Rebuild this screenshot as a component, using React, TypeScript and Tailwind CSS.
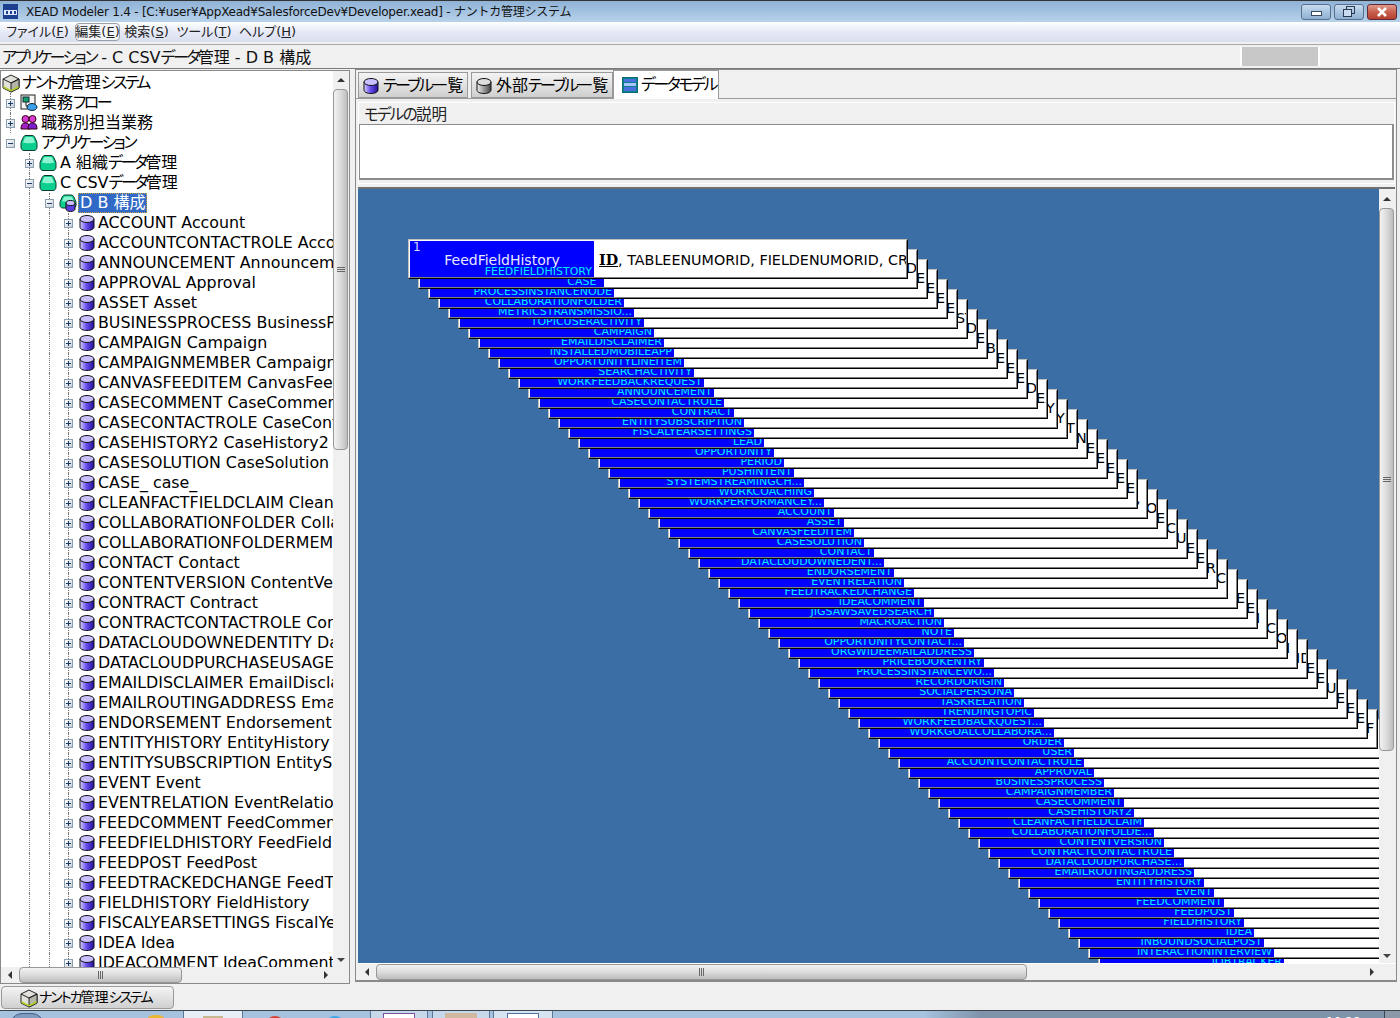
import React from 'react';

const tables = [
  'ACCOUNT Account', 'ACCOUNTCONTACTROLE AccountContactRole', 'ANNOUNCEMENT Announcement', 'APPROVAL Approval',
  'ASSET Asset', 'BUSINESSPROCESS BusinessProcess', 'CAMPAIGN Campaign', 'CAMPAIGNMEMBER CampaignMember',
  'CANVASFEEDITEM CanvasFeedItem', 'CASECOMMENT CaseComment', 'CASECONTACTROLE CaseContactRole', 'CASEHISTORY2 CaseHistory2',
  'CASESOLUTION CaseSolution', 'CASE_ case_', 'CLEANFACTFIELDCLAIM CleanFactFieldClaim', 'COLLABORATIONFOLDER CollaborationFolder',
  'COLLABORATIONFOLDERMEMBER Collaboration', 'CONTACT Contact', 'CONTENTVERSION ContentVersion', 'CONTRACT Contract',
  'CONTRACTCONTACTROLE ContractContactRole', 'DATACLOUDOWNEDENTITY DataCloud', 'DATACLOUDPURCHASEUSAGE DataCloud', 'EMAILDISCLAIMER EmailDisclaimer',
  'EMAILROUTINGADDRESS EmailRouting', 'ENDORSEMENT Endorsement', 'ENTITYHISTORY EntityHistory', 'ENTITYSUBSCRIPTION EntitySubscription',
  'EVENT Event', 'EVENTRELATION EventRelation', 'FEEDCOMMENT FeedComment', 'FEEDFIELDHISTORY FeedFieldHistory',
  'FEEDPOST FeedPost', 'FEEDTRACKEDCHANGE FeedTrackedChange', 'FIELDHISTORY FieldHistory', 'FISCALYEARSETTINGS FiscalYearSettings',
  'IDEA Idea', 'IDEACOMMENT IdeaComment',
];

const cards = [
  ['FEEDFIELDHISTORY', ''], ['CASE_', 'D'], ['PROCESSINSTANCENODE', 'E'], ['COLLABORATIONFOLDER', 'ED'], ['METRICSTRANSMISSIO...', 'E'],
  ['TOPICUSERACTIVITY', 'E'], ['CAMPAIGN', 'ST'], ['EMAILDISCLAIMER', 'D'], ['INSTALLEDMOBILEAPP', 'E'], ['OPPORTUNITYLINEITEM', 'BC'],
  ['SEARCHACTIVITY', 'E'], ['WORKFEEDBACKREQUEST', 'ED'], ['ANNOUNCEMENT', 'E'], ['CASECONTACTROLE', 'DI'], ['CONTRACT', 'EX'],
  ['ENTITYSUBSCRIPTION', 'Y'], ['FISCALYEARSETTINGS', 'YI'], ['LEAD', 'T'], ['OPPORTUNITY', 'N'], ['PERIOD', 'ED'],
  ['PUSHINTENT', 'E'], ['SYSTEMSTREAMINGCH...', 'E'], ['WORKCOACHING', 'ED'], ['WORKPERFORMANCEY...', 'ED'], ['ACCOUNT', ','],
  ['ASSET', 'OL'], ['CANVASFEEDITEM', 'E'], ['CASESOLUTION', 'C'], ['CONTACT', 'U'], ['DATACLOUDOWNEDENT...', 'E'],
  ['ENDORSEMENT', 'E'], ['EVENTRELATION', 'R'], ['FEEDTRACKEDCHANGE', 'C'], ['IDEACOMMENT', ''], ['JIGSAWSAVEDSEARCH', 'E'],
  ['MACROACTION', 'E'], ['NOTE', 'I'], ['OPPORTUNITYCONTACT...', 'CF'], ['ORGWIDEEMAILADDRESS', 'O'], ['PRICEBOOKENTRY', 'I'],
  ['PROCESSINSTANCEWO...', 'ID'], ['RECORDORIGIN', 'E'], ['SOCIALPERSONA', 'E'], ['TASKRELATION', 'UN'], ['TRENDINGTOPIC', 'E'],
  ['WORKFEEDBACKQUEST...', 'ED'], ['WORKGOALCOLLABORA...', 'E'], ['ORDER', ' F'], ['USER', ''], ['ACCOUNTCONTACTROLE', ''],
  ['APPROVAL', ''], ['BUSINESSPROCESS', ''], ['CAMPAIGNMEMBER', ''], ['CASECOMMENT', ''], ['CASEHISTORY2', ''],
  ['CLEANFACTFIELDCLAIM', ''], ['COLLABORATIONFOLDE...', ''], ['CONTENTVERSION', ''], ['CONTRACTCONTACTROLE', ''], ['DATACLOUDPURCHASE...', ''],
  ['EMAILROUTINGADDRESS', ''], ['ENTITYHISTORY', ''], ['EVENT', ''], ['FEEDCOMMENT', ''], ['FEEDPOST', ''],
  ['FIELDHISTORY', ''], ['IDEA', ''], ['INBOUNDSOCIALPOST', ''], ['INTERACTIONINTERVIEW', ''], ['JOBTRACKER', ''],
];

// the UI font sets kana narrower than kanji, so tighten just the kana runs
const Ja = ({ text, tight = 'tracking-[-2.5px]' }: { text: string; tight?: string }) => (
  <>
    {text.split(/([ァ-ヶーぁ-ん]+)/).map((part, i) =>
      i % 2 ? (
        <span key={i} className={tight}>
          {part}
        </span>
      ) : (
        part
      ),
    )}
  </>
);

const Cylinder = ({ grey = false }: { grey?: boolean }) => (
  <svg width="18" height="18" viewBox="0 0 18 18" className="shrink-0">
    <defs>
      <linearGradient id="cylPurple" x1="0" x2="1" y1="0" y2="0">
        <stop offset="0" stopColor="#d8d0ff" />
        <stop offset="0.45" stopColor="#6a50ee" />
        <stop offset="1" stopColor="#20109a" />
      </linearGradient>
      <linearGradient id="cylGrey" x1="0" x2="1" y1="0" y2="0">
        <stop offset="0" stopColor="#f0f0f0" />
        <stop offset="0.5" stopColor="#999999" />
        <stop offset="1" stopColor="#444444" />
      </linearGradient>
    </defs>
    <path d="M2 5v8c0 2 3 3.500 7 3.500s7-1.500 7-3.500V5z" fill={grey ? 'url(#cylGrey)' : 'url(#cylPurple)'} stroke="#111" strokeWidth="1" />
    <ellipse cx="9" cy="5" rx="7" ry="3.500" fill={grey ? '#dddddd' : '#c9c0ff'} stroke="#111" strokeWidth="1" />
  </svg>
);

const GreenBox = () => (
  <svg width="18" height="18" viewBox="0 0 18 18" className="shrink-0">
    <path d="M6 1.500h6c1.500 0 2.300.8 2.800 2L16.800 8c.2.500.2 1 .2 1.500V13c0 2-1.200 3.500-3 3.500H4c-1.800 0-3-1.500-3-3.500V9.500c0-.5 0-1 .2-1.500l2-4.500c.5-1.200 1.300-2 2.800-2z" fill="#0acf8e" stroke="#0b3a2c" />
    <path d="M6.500 3h5c1 0 1.500.5 2 1.500L15 8.500c-2 1-10 1-12 0l1.500-4C5 3.500 5.500 3 6.500 3z" fill="#8cf4d0" />
  </svg>
);

const DbFolder = () => (
  <svg width="18" height="18" viewBox="0 0 18 18" className="shrink-0">
    <path d="M6 1h6c1.500 0 2.300.8 2.800 2l2 4.500c.2.500.2 1 .2 1.500v2c0 2-1.200 3-3 3H4c-1.800 0-3-1-3-3V9c0-.5 0-1 .2-1.500l2-4.500C3.700 1.800 4.500 1 6 1z" fill="#0acf8e" stroke="#0b3a2c" />
    <path d="M6.500 2.500h5c1 0 1.500.5 2 1.500L15 7.500H3L4.500 4c.5-1 1-1.500 2-1.500z" fill="#8cf4d0" />
    <path d="M7 9v6c0 1.500 2 2.500 4.500 2.500S16 16.500 16 15V9z" fill="#5a3fe0" stroke="#111" />
    <ellipse cx="11.500" cy="9" rx="4.500" ry="2.500" fill="#c9c0ff" stroke="#111" />
  </svg>
);

const SystemIcon = () => (
  <svg width="18" height="20" viewBox="0 0 18 20" className="shrink-0">
    <path d="M1 6l8-4 8 4v9l-8 4-8-4z" fill="#e2e2da" stroke="#222" />
    <path d="M9 10v9l8-4V6z" fill="#b4b4a8" stroke="#222" />
    <path d="M1 6l8 4 8-4" fill="none" stroke="#222" />
    <path d="M1.500 13l7.500 4 7.500-4v2l-7.500 3.500-7.500-3.500z" fill="#b4d020" />
  </svg>
);

const FlowIcon = () => (
  <svg width="18" height="18" viewBox="0 0 18 18" className="shrink-0">
    <rect x="1" y="1" width="14" height="14" fill="#f4f4f4" stroke="#222" />
    <rect x="3" y="3" width="6" height="5" fill="#0fa36b" stroke="#123" />
    <ellipse cx="12" cy="13" rx="5" ry="3.500" fill="#3aa0ea" stroke="#123" />
    <path d="M6 8v4h2" fill="none" stroke="#222" />
  </svg>
);

const PeopleIcon = () => (
  <svg width="18" height="18" viewBox="0 0 18 18" className="shrink-0">
    <circle cx="5.500" cy="5" r="3.500" fill="#d53ad5" stroke="#301" />
    <circle cx="12.500" cy="5" r="3.500" fill="#d53ad5" stroke="#301" />
    <path d="M1 15c0-5 2-6 4.500-6S10 10 10 15z" fill="#a022c8" stroke="#301" />
    <path d="M8 15c0-5 2-6 4.500-6s4.500 1 4.500 6z" fill="#7a1fd0" stroke="#301" />
  </svg>
);

const ModelIcon = () => (
  <svg width="16" height="16" viewBox="0 0 16 16" className="shrink-0">
    <rect x="0.500" y="0.500" width="15" height="15" fill="#0d7f86" stroke="#0d6f76" />
    <rect x="2" y="2" width="12" height="3" fill="#4a6fe0" />
    <rect x="2" y="6" width="12" height="3" fill="#a8c4ff" />
    <rect x="2" y="10" width="12" height="4" fill="#4a6fe0" />
  </svg>
);

const Expander = ({ open = false }: { open?: boolean }) => (
  <span className="relative flex h-[9px] w-[9px] items-center justify-center border border-[#8c9fb1] bg-gradient-to-br from-white to-[#c8d0d8]">
    <span className="absolute h-px w-[5px] bg-[#1c3a66]" />
    {!open && <span className="absolute h-[5px] w-px bg-[#1c3a66]" />}
  </span>
);

// one column of the tree's indent, with optional dotted guide and expander
const Indent = ({ width, guide, box }: { width: string; guide?: boolean; box?: 'open' | 'closed' }) => (
  <div className={`relative flex h-full shrink-0 items-center justify-center ${width}`}>
    {guide && <div className="h-full border-l border-dotted border-[#777777]" />}
    {box && (
      <div className="absolute inset-0 flex items-center justify-center">
        <Expander open={box === 'open'} />
      </div>
    )}
  </div>
);

const TableRow = ({ label }: { label: string }) => (
  <div className="flex h-5 items-center whitespace-nowrap">
    <Indent width="w-[19px]" />
    <Indent width="w-[19px]" guide />
    <Indent width="w-5" guide />
    <Indent width="w-[19px]" guide box="closed" />
    <Cylinder />
    <span className="ml-[2px] text-[15.850px] text-black">{label}</span>
  </div>
);

const VScroll = ({ before, thumb }: { before: string; thumb: string }) => (
  <div className="flex w-4 shrink-0 flex-col bg-[#f0f0f0]">
    <div className={`flex shrink-0 items-center justify-center ${before}`}>
      <span className="h-0 w-0 border-x-[4px] border-b-[4px] border-x-transparent border-b-[#333333]" />
    </div>
    <div className={`flex shrink-0 flex-col items-center justify-center gap-px rounded-sm border border-[#979797] bg-gradient-to-r from-[#f2f2f2] via-[#dcdcdc] to-[#bdbdbd] ${thumb}`}>
      <span className="h-px w-2 bg-[#666666]" />
      <span className="h-px w-2 bg-[#666666]" />
      <span className="h-px w-2 bg-[#666666]" />
    </div>
    <div className="flex flex-1 items-end justify-center pb-[5px]">
      <span className="h-0 w-0 border-x-[4px] border-t-[4px] border-x-transparent border-t-[#444444]" />
    </div>
  </div>
);

const HScroll = ({ before, thumb }: { before: string; thumb: string }) => (
  <div className="flex h-4 shrink-0 bg-[#f0f0f0]">
    <div className={`flex shrink-0 items-center justify-center ${before}`}>
      <span className="h-0 w-0 border-y-[4px] border-r-[4px] border-y-transparent border-r-[#333333]" />
    </div>
    <div className={`flex shrink-0 items-center justify-center gap-px rounded-sm border border-[#979797] bg-gradient-to-b from-[#f2f2f2] via-[#dcdcdc] to-[#bdbdbd] ${thumb}`}>
      <span className="h-2 w-px bg-[#666666]" />
      <span className="h-2 w-px bg-[#666666]" />
      <span className="h-2 w-px bg-[#666666]" />
    </div>
    <div className="flex flex-1 items-center justify-end pr-[5px]">
      <span className="h-0 w-0 border-y-[4px] border-l-[4px] border-y-transparent border-l-[#333333]" />
    </div>
  </div>
);

const MenuItem = ({ name, letter, width, hover }: { name: string; letter: string; width: string; hover?: boolean }) => (
  <div className={`flex h-[18px] shrink-0 items-center justify-center whitespace-nowrap rounded-sm text-[13px] text-[#222222] ${width} ${hover ? 'border border-[#9aa0a8] bg-[#f4f5f9]' : ''}`}>
    {name}(<span className="underline">{letter}</span>)
  </div>
);

const WinButton = ({ kind }: { kind: 'min' | 'max' | 'close' }) => (
  <div
    className={`flex h-4 w-[30px] shrink-0 items-center justify-center rounded-[3px] border ${
      kind === 'close'
        ? 'border-[#5e2a35] bg-gradient-to-b from-[#e09a8e] via-[#c9604e] to-[#b5402f]'
        : 'border-[#5a6f8c] bg-gradient-to-b from-[#c8dcf0] via-[#a9c4e0] to-[#8fb0d2]'
    }`}
  >
    {kind === 'min' && <span className="mt-1 h-[5px] w-[11px] border border-[#3a4a60] bg-white" />}
    {kind === 'max' && (
      <svg width="12" height="11" viewBox="0 0 12 11">
        <rect x="3.500" y="0.500" width="8" height="7" fill="none" stroke="#2a3a50" />
        <rect x="0.500" y="3.500" width="8" height="7" fill="#c8dcf0" stroke="#2a3a50" />
      </svg>
    )}
    {kind === 'close' && (
      <svg width="12" height="10" viewBox="0 0 12 10">
        <path d="M2 1l8 8M10 1l-8 8" stroke="#ffffff" strokeWidth="2.500" />
      </svg>
    )}
  </div>
);

const Card = ({ index, label, edge }: { index: number; label: string; edge: string }) => (
  <div
    className="absolute h-10 w-[500px] border border-t-[#c0c0c0] border-l-[#c0c0c0] border-r-black border-b-black"
    style={{ left: 50 + index * 10, top: 50 + index * 10, zIndex: 100 - index }}
  >
    <div className="flex h-full border border-t-white border-l-white border-r-[#808080] border-b-[#808080] bg-white">
      <div className="flex w-[184px] shrink-0 flex-col overflow-hidden bg-[#0000ff]">
        <div className="h-[13px] pl-[3px] text-[12px] leading-[13px] text-[#d8d8ff]">{index === 0 ? '1' : ''}</div>
        <div className="h-[12px] whitespace-nowrap text-center text-[14px] leading-[12px] text-[#e8e8ff]">{index === 0 ? 'FeedFieldHistory' : ''}</div>
        <div className="h-[11px] whitespace-nowrap pr-[2px] text-right text-[11px] leading-[11px] text-[#00e8ff]">{label}</div>
      </div>
      {index === 0 ? (
        <div className="flex flex-1 items-center overflow-hidden whitespace-nowrap pl-[5px] pt-[3px] text-[14.300px] text-black">
          <span className="font-['DejaVu_Serif',serif] font-bold underline">ID</span>, TABLEENUMORID, FIELDENUMORID, CREATEDDATE
        </div>
      ) : (
        <div className="flex flex-1 items-center justify-end overflow-hidden whitespace-nowrap text-[14.300px] text-black">
          <span className="w-[10px] overflow-hidden">{edge}</span>
        </div>
      )}
    </div>
  </div>
);

const App = () => {
  return (
    <div className="flex h-[1018px] w-[1400px] flex-col overflow-hidden bg-[#f0f0f0] font-['DejaVu_Sans','Noto_Sans_CJK_JP',sans-serif] text-[16px] [font-feature-settings:'palt']">
      {/* title bar */}
      <div className="flex h-[22px] shrink-0 items-center border-t border-[#333333] bg-gradient-to-b from-[#8fb2d6] to-[#b8d2ea] pl-[3px] pr-[3px]">
        <svg width="15" height="15" viewBox="0 0 15 15" className="shrink-0">
          <rect width="15" height="15" fill="#1d3f8f" />
          <rect x="1" y="6" width="13" height="5" fill="#dfe8ff" />
          <rect x="3" y="7" width="2" height="3" fill="#1d3f8f" />
          <rect x="7" y="7" width="2" height="3" fill="#1d3f8f" />
          <rect x="11" y="7" width="2" height="3" fill="#1d3f8f" />
        </svg>
        <span className="ml-2 flex-1 whitespace-nowrap text-[12px] tracking-[-0.23px] text-[#111111] [font-feature-settings:normal]">
          XEAD Modeler 1.4 - [C:¥user¥AppXead¥SalesforceDev¥Developer.xead] - ナントカ管理システム
        </span>
        <div className="flex gap-[3px]">
          <WinButton kind="min" />
          <WinButton kind="max" />
          <WinButton kind="close" />
        </div>
      </div>

      {/* menu bar */}
      <div className="flex h-5 shrink-0 items-center bg-gradient-to-b from-white via-[#e6e9f6] to-[#d9dff0]">
        <MenuItem name="ファイル" letter="F" width="w-[75px]" />
        <MenuItem name="編集" letter="E" width="w-[45px]" hover />
        <MenuItem name="検索" letter="S" width="w-[53px]" />
        <MenuItem name="ツール" letter="T" width="w-[62px]" />
        <MenuItem name="ヘルプ" letter="H" width="w-[65px]" />
      </div>

      {/* breadcrumb bar */}
      <div className="mt-[2px] flex h-[25px] shrink-0 border-y border-t-[#a8a8a8] border-b-[#7a7a7a] bg-[#f0f0f0]">
        <div className="w-[1240px] shrink-0 whitespace-nowrap pl-[2px] text-[16px] leading-[25px] text-[#111111]">
          <Ja text="アプリケーション - C CSVデータ管理 - D B 構成" tight="tracking-[-2.5px]" />
        </div>
        <div className="my-[2px] w-[80px] shrink-0 border-x-2 border-x-white bg-[#c8c8c8]" />
      </div>

      <div className="flex h-[915px] shrink-0">
        {/* tree panel */}
        <div className="mt-px flex h-[914px] w-[350px] shrink-0 flex-col border border-[#8a8a8a] bg-white">
          <div className="flex min-h-0 flex-1">
            <div className="h-[896px] w-[332px] shrink-0 overflow-hidden pt-[2px]">
              <div className="flex h-5 items-center whitespace-nowrap">
                <div className="w-[1px]" />
                <SystemIcon />
                <span className="ml-[2px]"><Ja text="ナントカ管理システム" /></span>
              </div>
              <div className="flex h-5 items-center whitespace-nowrap">
                <Indent width="w-[19px]" guide box="closed" />
                <FlowIcon />
                <span className="ml-[3px]"><Ja text="業務フロー" /></span>
              </div>
              <div className="flex h-5 items-center whitespace-nowrap">
                <Indent width="w-[19px]" guide box="closed" />
                <PeopleIcon />
                <span className="ml-[3px]">職務別担当業務</span>
              </div>
              <div className="flex h-5 items-center whitespace-nowrap">
                <Indent width="w-[19px]" box="open" />
                <GreenBox />
                <span className="ml-[3px]"><Ja text="アプリケーション" /></span>
              </div>
              <div className="flex h-5 items-center whitespace-nowrap">
                <Indent width="w-[19px]" />
                <Indent width="w-[19px]" guide box="closed" />
                <GreenBox />
                <span className="ml-[3px]"><Ja text="A 組織データ管理" /></span>
              </div>
              <div className="flex h-5 items-center whitespace-nowrap">
                <Indent width="w-[19px]" />
                <Indent width="w-[19px]" guide box="open" />
                <GreenBox />
                <span className="ml-[3px]"><Ja text="C CSVデータ管理" /></span>
              </div>
              <div className="flex h-5 items-center whitespace-nowrap">
                <Indent width="w-[19px]" />
                <Indent width="w-[19px]" guide />
                <Indent width="w-5" guide box="open" />
                <DbFolder />
                <span className="ml-[1px] border border-dotted border-[#c8a040] bg-[#3169c6] px-px leading-[18px] text-white">D B 構成</span>
              </div>
              {tables.map((t) => (
                <TableRow key={t} label={t} />
              ))}
            </div>
            <VScroll before="h-[18px]" thumb="h-[361px] w-[15px]" />
          </div>
          <div className="flex h-[16px] shrink-0">
            <div className="w-[332px] shrink-0">
              <HScroll before="w-[18px]" thumb="w-[163px]" />
            </div>
            <div className="w-4 bg-[#f0f0f0]" />
          </div>
        </div>

        <div className="w-[5px] shrink-0" />

        {/* right panel */}
        <div className="flex h-[913px] w-[1042px] shrink-0 flex-col border-x border-b-2 border-t border-[#8a8a8a]">
          <div className="flex h-[28px] shrink-0 items-end pl-[2px]">
            <div className="flex h-[26px] w-[110px] items-center gap-[3px] border border-[#9a9a9a] bg-gradient-to-b from-[#f4f4f4] to-[#cfcfcf] pl-[3px] pt-px">
              <Cylinder />
              <span className="whitespace-nowrap"><Ja text="テーブル一覧" /></span>
            </div>
            <div className="ml-[3px] flex h-[26px] w-[142px] items-center gap-[3px] border border-[#9a9a9a] bg-gradient-to-b from-[#f4f4f4] to-[#cfcfcf] pl-[3px] pt-px">
              <Cylinder grey />
              <span className="whitespace-nowrap"><Ja text="外部テーブル一覧" /></span>
            </div>
            <div className="relative z-10 -mb-px flex h-[29px] w-[106px] items-center gap-[3px] border border-b-0 border-[#9a9a9a] bg-white pl-2">
              <ModelIcon />
              <span className="whitespace-nowrap"><Ja text="データモデル" /></span>
            </div>
          </div>

          <div className="flex min-h-0 flex-1 flex-col border-t border-[#9a9a9a] pl-[2px] pr-px pt-[3px]">
            <div className="flex h-[82px] shrink-0 flex-col border border-white">
              <div className="h-[21px] shrink-0 whitespace-nowrap pl-[5px] text-[15.500px] leading-[24px] text-[#222222]"><Ja text="モデルの説明" tight="tracking-[-1.7px]" /></div>
              <div className="h-[56px] shrink-0 border border-r-2 border-b-2 border-[#8c8c8c] bg-white" />
            </div>
            <div className="mt-[3px] flex min-h-0 flex-1 flex-col border-t-2 border-[#707070]">
              <div className="flex h-[774px] shrink-0">
                <div className="relative h-[774px] w-[1021px] shrink-0 overflow-hidden bg-[#3b6ea5]">
                  {cards.map(([label, edge], i) => (
                    <Card key={label} index={i} label={label} edge={edge} />
                  ))}
                </div>
                <VScroll before="h-[19px]" thumb="h-[543px] w-[15px]" />
              </div>
              <div className="flex h-4 shrink-0 border-t border-white">
                <div className="w-[1021px] shrink-0">
                  <HScroll before="w-[18px]" thumb="w-[651px]" />
                </div>
                <div className="w-4 bg-[#f0f0f0]" />
              </div>
            </div>
          </div>
        </div>
      </div>

      {/* window list */}
      <div className="flex h-[26px] shrink-0 items-start pl-px pt-[2px]">
        <div className="flex h-[23px] w-[173px] items-center gap-px rounded-sm border border-[#9a9a9a] bg-gradient-to-b from-[#f4f4f4] to-[#d0d0d0] pl-[18px] text-[14px]">
          <SystemIcon />
          <span className="whitespace-nowrap"><Ja text="ナントカ管理システム" tight="tracking-[-2px]" /></span>
        </div>
      </div>

      {/* OS taskbar, mostly cut off */}
      <div className="flex h-2 shrink-0 overflow-hidden border-t border-[#3a4550] bg-gradient-to-r from-[#a6c2de] via-[#a6c2de] via-[66%] to-[#7f94ab] to-[70%]">
        <div className="ml-[10px] mt-[2px] h-6 w-[34px] shrink-0 rounded-full border border-[#42618a] bg-[#7f9cc0]" />
        <div className="ml-[102px] mt-[4px] h-6 w-5 shrink-0 rounded-t-lg bg-[#e8b830]" />
        <div className="ml-[17px] flex w-[60px] shrink-0 justify-center border-x border-[#5a7796] bg-[#e6eef6] pt-[5px]">
          <span className="h-6 w-5 bg-[#c8b890]" />
        </div>
        <div className="ml-[22px] mt-[5px] h-6 w-5 shrink-0 rounded-t-full bg-[#d84030]" />
        <div className="ml-[40px] mt-[5px] h-6 w-5 shrink-0 rounded-t-full bg-[#3aa8e8]" />
        <div className="ml-[25px] flex w-[58px] shrink-0 justify-center border-x border-[#5a7796] bg-[#c6d8ea] pt-[2px]">
          <span className="h-6 w-8 border border-[#8050a0] bg-white" />
        </div>
        <div className="ml-[4px] flex w-[58px] shrink-0 justify-center border-x border-[#5a7796] bg-[#c6d8ea] pt-[2px]">
          <span className="h-6 w-8 bg-[#d0b8a0]" />
        </div>
        <div className="ml-[3px] flex w-[60px] shrink-0 justify-center border-x border-[#5a7796] bg-[#d6e4f2] pt-[2px]">
          <span className="h-6 w-8 border border-[#5070a0] bg-white" />
        </div>
        <div className="flex-1" />
        <div className="w-[58px] shrink-0 pt-[5px] text-[12px] leading-3 text-white">10:28</div>
        <div className="w-4 shrink-0 border-l border-[#3a4550] bg-[#8a98a8]" />
      </div>
    </div>
  );
};

export default App;
